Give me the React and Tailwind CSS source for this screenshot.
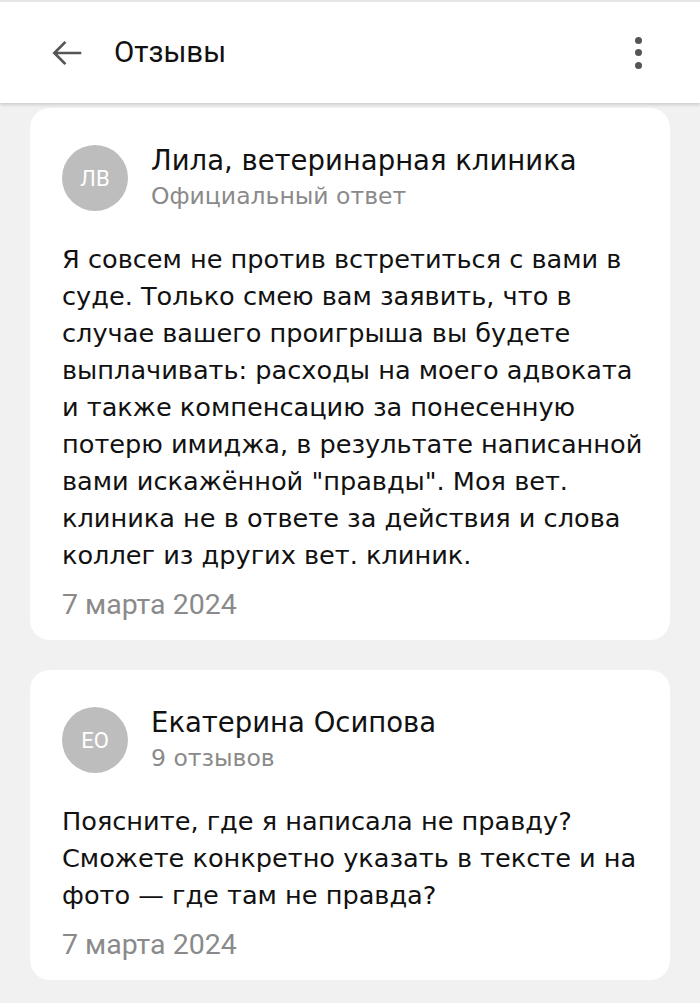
import React from 'react';

const reviews = [
  {
    initials: 'ЛВ',
    name: 'Лила, ветеринарная клиника',
    sub: 'Официальный ответ',
    text: 'Я совсем не против встретиться с вами в суде. Только смею вам заявить, что в случае вашего проигрыша вы будете выплачивать: расходы на моего адвоката и также компенсацию за понесенную потерю имиджа, в результате написанной вами искажённой "правды". Моя вет. клиника не в ответе за действия и слова коллег из других вет. клиник.',
    date: '7 марта 2024',
  },
  {
    initials: 'ЕО',
    name: 'Екатерина Осипова',
    sub: '9 отзывов',
    text: 'Поясните, где я написала не правду? Сможете конкретно указать в тексте и на фото — где там не правда?',
    date: '7 марта 2024',
  },
];

function ReviewCard({ r }) {
  return (
    <div className="bg-white rounded-[20px] pl-[32px] pr-[24px] pt-[34px] pb-[15px]">
      <div className="flex items-center">
        <div className="w-[66px] h-[66px] rounded-full bg-[#bdbdbd] flex items-center justify-center text-white text-[22px] [font-family:Roboto,sans-serif] shrink-0">
          {r.initials}
        </div>
        <div className="ml-[23px] [font-family:DejaVu_Sans,sans-serif]">
          <div className="text-[27.5px] leading-[36px] text-[#111]">{r.name}</div>
          <div className="text-[23.5px] leading-[36px] text-[#8a8a8a]">{r.sub}</div>
        </div>
      </div>
      <p className="mt-[27px] [font-family:DejaVu_Sans,sans-serif] text-[25.6px] leading-[37px] text-[#111]">
        {r.text}
      </p>
      <div className="mt-[11px] [font-family:Roboto,sans-serif] text-[28.5px] leading-[40px] text-[#8a8a8a]">
        {r.date}
      </div>
    </div>
  );
}

export default function App() {
  return (
    <div className="min-h-[1003px] bg-[#f1f1f1]">
      <header className="h-[103px] bg-white border-t-2 border-[#e6e6e6] shadow-[0_2px_3px_rgba(0,0,0,0.15)] flex items-center pl-[48px] pr-[58px] relative z-10">
        <svg width="38" height="38" viewBox="0 0 24 24" className="text-[#555]">
          <path d="M21 12H4M11 5l-7 7 7 7" fill="none" stroke="currentColor" strokeWidth="1.7" />
        </svg>
        <h1 className="ml-[28px] [font-family:Roboto,sans-serif] font-normal text-[29.5px] text-[#111]">Отзывы</h1>
        <div className="ml-auto flex flex-col gap-[5.5px]">
          <span className="w-[7px] h-[7px] rounded-full bg-[#555]" />
          <span className="w-[7px] h-[7px] rounded-full bg-[#555]" />
          <span className="w-[7px] h-[7px] rounded-full bg-[#555]" />
        </div>
      </header>
      <div className="px-[30px] pt-[5px] flex flex-col gap-[30px]">
        {reviews.map((r, i) => (
          <ReviewCard key={i} r={r} />
        ))}
      </div>
    </div>
  );
}
